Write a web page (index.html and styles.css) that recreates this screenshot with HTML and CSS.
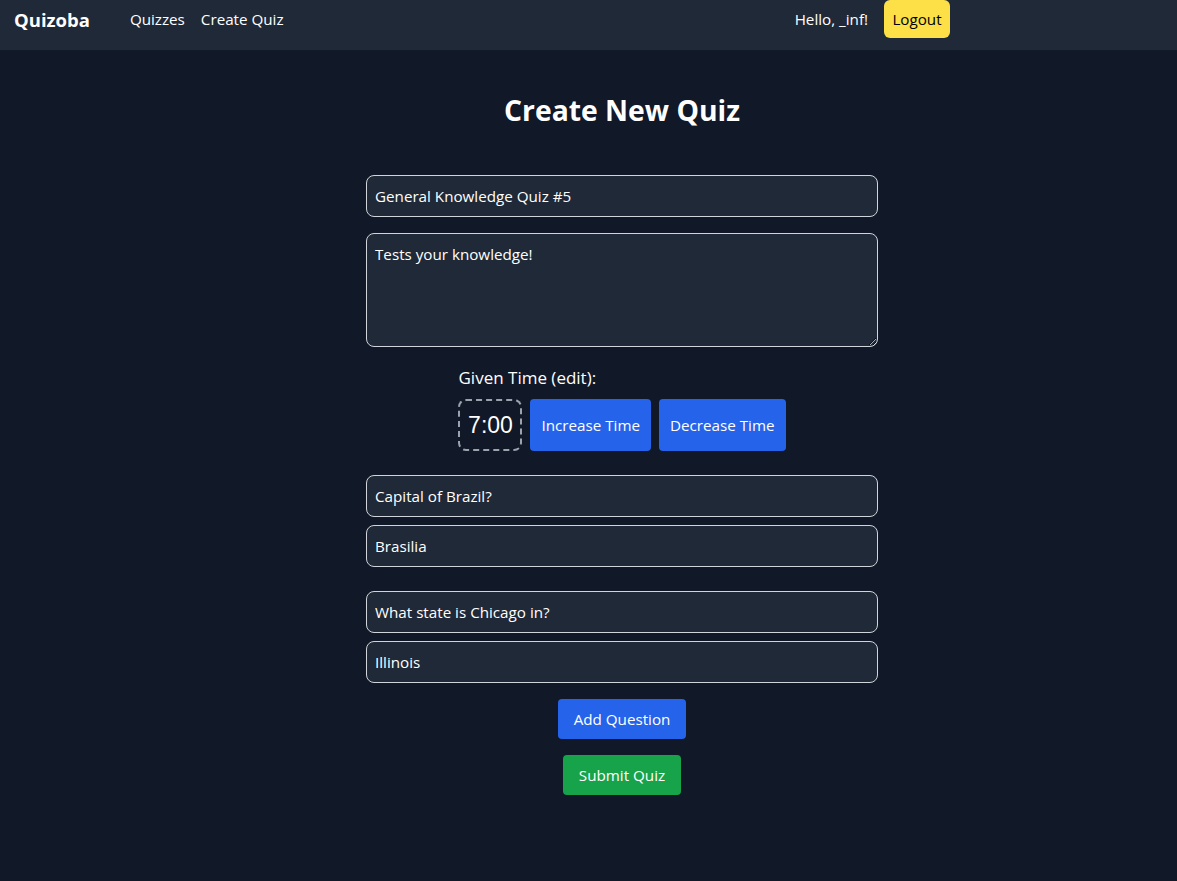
FILE: index.html
```html
<!DOCTYPE html>
<html lang="en">
<head>
<meta charset="utf-8">
<title>Quizoba - Create Quiz</title>
<link rel="stylesheet" href="styles.css">
</head>
<body>
<nav class="nav">
  <div class="nav-left">
    <a class="brand" href="#">Quizoba</a>
    <a class="nav-link" href="#">Quizzes</a>
    <a class="nav-link" href="#">Create Quiz</a>
  </div>
  <div class="nav-right">
    <span class="hello">Hello, _inf!</span>
    <button class="btn-logout">Logout</button>
  </div>
</nav>
<main class="main">
  <h1 class="title">Create New Quiz</h1>
  <form class="form">
    <input class="field field-title" type="text" value="General Knowledge Quiz #5">
    <textarea class="field area" rows="4">Tests your knowledge!</textarea>
    <div class="time">
      <div class="time-label">Given Time (edit):</div>
      <div class="time-row">
        <div class="timer">7:00</div>
        <button type="button" class="btn btn-blue btn-time">Increase Time</button>
        <button type="button" class="btn btn-blue btn-time">Decrease Time</button>
      </div>
    </div>
    <div class="question">
      <input class="field" type="text" value="Capital of Brazil?">
      <input class="field" type="text" value="Brasilia">
    </div>
    <div class="question question-last">
      <input class="field" type="text" value="What state is Chicago in?">
      <input class="field" type="text" value="Illinois">
    </div>
    <div class="actions">
      <button type="button" class="btn btn-blue btn-action">Add Question</button>
      <button type="button" class="btn btn-green btn-action">Submit Quiz</button>
    </div>
  </form>
</main>
</body>
</html>
```
FILE: styles.css
```css
* { box-sizing: border-box; }
html, body { margin: 0; padding: 0; }
body {
  background: #111827;
  color: #ffffff;
  font-family: "Open Sans", "Noto Sans", sans-serif;
  font-size: 15.2px;
  min-height: 881px;
}
.nav {
  height: 50px;
  background: #1f2937;
  display: flex;
  justify-content: space-between;
  align-items: flex-start;
  padding: 0 227px 0 14px;
}
.nav-left, .nav-right {
  display: flex;
  align-items: center;
  height: 38px;
}
.brand {
  color: #fff;
  text-decoration: none;
  font-weight: 700;
  font-size: 18.5px;
  margin-right: 40px;
}
.nav-link {
  color: #fff;
  text-decoration: none;
  margin-right: 16px;
}
.hello { margin-right: 16px; }
.btn-logout {
  font: inherit;
  background: #fde047;
  color: #000;
  border: none;
  border-radius: 6px;
  height: 38px;
  width: 66px;
  padding: 0;
}
.main {
  padding: 42px 0 40px 67px;
}
.title {
  margin: 0 0 47px;
  text-align: center;
  font-size: 28.3px;
  line-height: 36px;
  font-weight: 700;
}
.form {
  width: 512px;
  margin: 0 auto;
  display: flex;
  flex-direction: column;
}
.field {
  display: block;
  width: 100%;
  font: inherit;
  color: #fff;
  background: #1f2937;
  border: 1px solid #d1d5db;
  border-radius: 8px;
  padding: 8px;
  line-height: 24px;
  height: 42px;
  margin: 0;
}
.field-title { margin-bottom: 16px; }
.area {
  height: 114px;
  resize: vertical;
  margin-bottom: 17px;
}
.time {
  align-self: center;
  margin-bottom: 24px;
}
.time-label {
  font-size: 17px;
  line-height: 28px;
  margin-bottom: 7px;
}
.time-row {
  display: flex;
  gap: 8px;
  height: 52px;
}
.timer {
  border: 2px dashed #9ca3af;
  border-radius: 8px;
  font-family: "Liberation Sans", Arial, sans-serif;
  font-size: 23px;
  line-height: 48px;
  width: 64px;
  text-align: center;
}
.btn {
  font: inherit;
  color: #fff;
  border: none;
  border-radius: 4px;
}
.btn-blue { background: #2563eb; }
.btn-green { background: #16a34a; }
.btn-time { padding: 0 11px; }
.question {
  display: flex;
  flex-direction: column;
  gap: 8px;
  margin-bottom: 24px;
}
.question-last { margin-bottom: 16px; }
.actions {
  display: flex;
  flex-direction: column;
  align-items: center;
  gap: 16px;
}
.btn-action {
  height: 40px;
  padding: 0 16px;
}
```
